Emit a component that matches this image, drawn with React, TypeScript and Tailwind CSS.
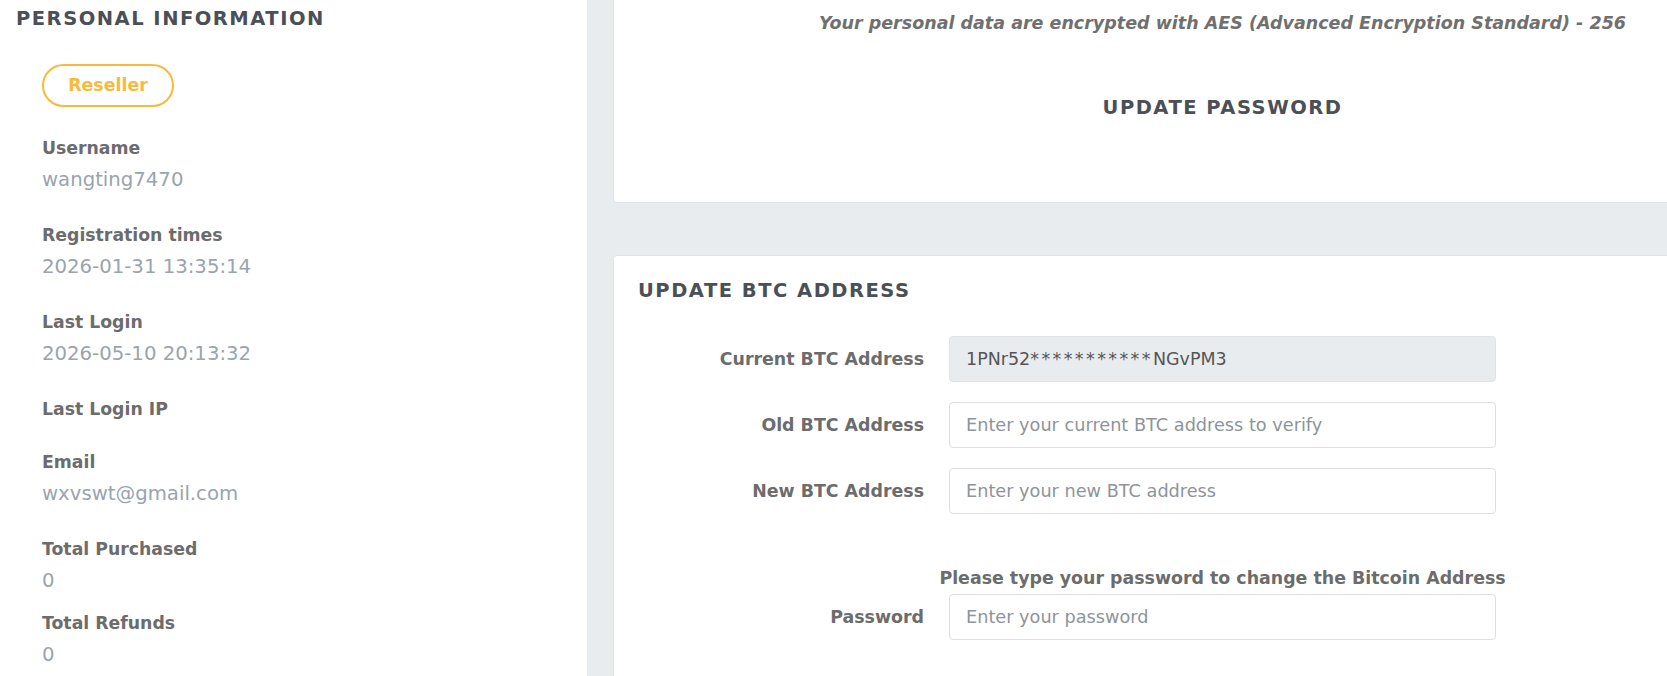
import React from "react";

type InfoItem = {
  label: string;
  value: string;
  gap: string;
};

const items: InfoItem[] = [
  { label: "Username", value: "wangting7470", gap: "mb-[30px]" },
  { label: "Registration times", value: "2026-01-31 13:35:14", gap: "mb-[30px]" },
  { label: "Last Login", value: "2026-05-10 20:13:32", gap: "mb-[30px]" },
  { label: "Last Login IP", value: "", gap: "mb-[29px]" },
  { label: "Email", value: "wxvswt@gmail.com", gap: "mb-[30px]" },
  { label: "Total Purchased", value: "0", gap: "mb-[17px]" },
  { label: "Total Refunds", value: "0", gap: "mb-[17px]" },
];

function FormRow({
  label,
  children,
}: {
  label: string;
  children: React.ReactNode;
}): React.ReactElement {
  return (
    <div className="flex items-center">
      <label className="mr-[25px] w-[286px] text-right text-[17.4px] font-bold text-[#6c6c6c]">
        {label}
      </label>
      <div className="w-[547px]">{children}</div>
    </div>
  );
}

function TextInput({ placeholder }: { placeholder: string }): React.ReactElement {
  return (
    <input
      type="text"
      placeholder={placeholder}
      className="h-[46px] w-full rounded-[4px] border border-[#dcdfe3] bg-white px-[16px] text-[17.7px] text-[#555] outline-none placeholder:text-[#8d949a]"
    />
  );
}

export default function App(): React.ReactElement {
  return (
    <div className="flex h-[676px] w-[1667px] overflow-hidden bg-[#e9ecef] font-['DejaVu_Sans',sans-serif]">
      {/* Personal information column */}
      <aside className="w-[587px] shrink-0 bg-white pl-[16px] pt-[6px]">
        <h2 className="text-[19.5px] leading-[26px] font-bold tracking-[1.5px] text-[#4b4f56]">
          PERSONAL INFORMATION
        </h2>

        <div className="mt-[32px] ml-[26px]">
          <span className="inline-flex h-[43px] w-[132px] items-center justify-center rounded-full border-2 border-[#fbb93c] text-[17.4px] font-bold text-[#fbb93c]">
            Reseller
          </span>
        </div>

        <div className="mt-[29px] ml-[26px]">
          {items.map((item) => (
            <div key={item.label} className={item.gap}>
              <div className="text-[17.3px] leading-[24px] font-bold text-[#6c6c6c]">
                {item.label}
              </div>
              {item.value && (
                <div className="mt-[7px] text-[19.7px] leading-[26px] text-[#9aa4ad]">
                  {item.value}
                </div>
              )}
            </div>
          ))}
        </div>
      </aside>

      {/* Settings column */}
      <main className="mr-[-40px] flex-1 pl-[26px]">
        <section className="rounded-b-[4px] border border-t-0 border-[#e0e3e7] bg-white pt-[11px] pr-[80px] pb-[81px] pl-[24px]">
          <p className="text-right text-[17.5px] leading-[24px] font-bold italic text-[#707070]">
            Your personal data are encrypted with AES (Advanced Encryption Standard) - 256
          </p>
          <div className="mt-[60px] flex">
            <div className="mr-[25px] w-[286px]" />
            <h2 className="w-[547px] text-center text-[19.5px] leading-[26px] font-bold tracking-[1.5px] text-[#4b4f56]">
              UPDATE PASSWORD
            </h2>
          </div>
        </section>

        <section className="mt-[52px] h-[500px] rounded-[4px] border border-[#e0e3e7] bg-white pt-[22px] pl-[24px]">
          <h2 className="text-[19.5px] leading-[26px] font-bold tracking-[1.5px] text-[#4b4f56]">
            UPDATE BTC ADDRESS
          </h2>

          <div className="mt-[32px] flex flex-col gap-[20px]">
            <FormRow label="Current BTC Address">
              <div className="flex h-[46px] items-center rounded-[4px] border border-[#dfe2e6] bg-[#e9ecef] px-[16px] text-[17.5px] text-[#555]">
                1PNr52<span className="tracking-[2.4px]">***********</span>NGvPM3
              </div>
            </FormRow>
            <FormRow label="Old BTC Address">
              <TextInput placeholder="Enter your current BTC address to verify" />
            </FormRow>
            <FormRow label="New BTC Address">
              <TextInput placeholder="Enter your new BTC address" />
            </FormRow>
          </div>

          <div className="mt-[52px] flex">
            <div className="mr-[25px] w-[286px] shrink-0" />
            <div className="flex w-[547px] justify-center">
              <span className="text-[17.4px] leading-[24px] font-bold whitespace-nowrap text-[#6c6c6c]">
                Please type your password to change the Bitcoin Address
              </span>
            </div>
          </div>

          <div className="mt-[4px]">
            <FormRow label="Password">
              <TextInput placeholder="Enter your password" />
            </FormRow>
          </div>
        </section>
      </main>
    </div>
  );
}
